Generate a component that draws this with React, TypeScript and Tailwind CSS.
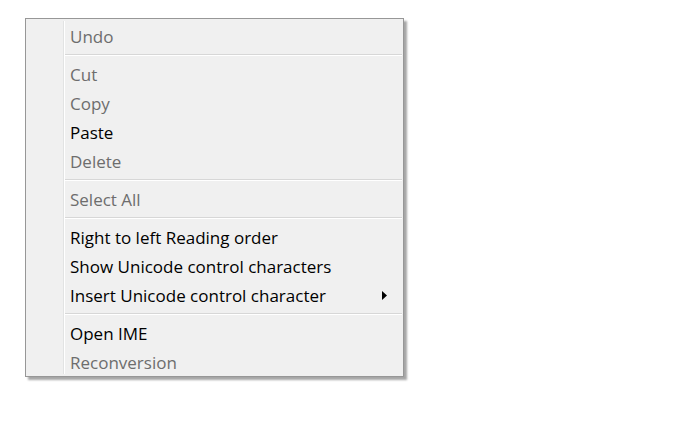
import React from "react";

type Item = { label: string; disabled?: boolean; sub?: boolean } | "sep";

const items: Item[] = [
  { label: "Undo", disabled: true },
  "sep",
  { label: "Cut", disabled: true },
  { label: "Copy", disabled: true },
  { label: "Paste" },
  { label: "Delete", disabled: true },
  "sep",
  { label: "Select All", disabled: true },
  "sep",
  { label: "Right to left Reading order" },
  { label: "Show Unicode control characters" },
  { label: "Insert Unicode control character", sub: true },
  "sep",
  { label: "Open IME" },
  { label: "Reconversion", disabled: true },
];

export default function App() {
  return (
    <div className="w-[700px] h-[435px] bg-white pl-[25px] pt-[18px]" style={{ fontFamily: '"Open Sans", "Noto Sans", sans-serif' }}>
      <div className="w-[379px] h-[359px] bg-[#f0f0f0] border border-[#979797] shadow-[3px_3px_2px_rgba(0,0,0,0.35)] flex py-[2px]">
        <div className="w-[37px] shrink-0" />
        <div className="flex-1 border-l border-[#e2e3e3]">
          <div className="h-full border-l border-white pr-[1px]">
            {items.map((it, i) =>
              it === "sep" ? (
                <div key={i} className="h-[9px] flex flex-col justify-center">
                  <div className="h-[1px] bg-[#d7d7d7]" />
                  <div className="h-[1px] bg-white" />
                </div>
              ) : (
                <div
                  key={i}
                  className={`h-[29px] flex items-center pl-[5px] pr-[15px] pt-[2px] text-[17px] ${it.disabled ? "text-[#6d6d6d]" : "text-black"}`}
                >
                  <span className="flex-1">{it.label}</span>
                  {it.sub && (
                    <svg width="5" height="9" viewBox="0 0 5 9">
                      <path d="M0 0 L5 4.5 L0 9 Z" fill="#000" />
                    </svg>
                  )}
                </div>
              )
            )}
          </div>
        </div>
      </div>
    </div>
  );
}
